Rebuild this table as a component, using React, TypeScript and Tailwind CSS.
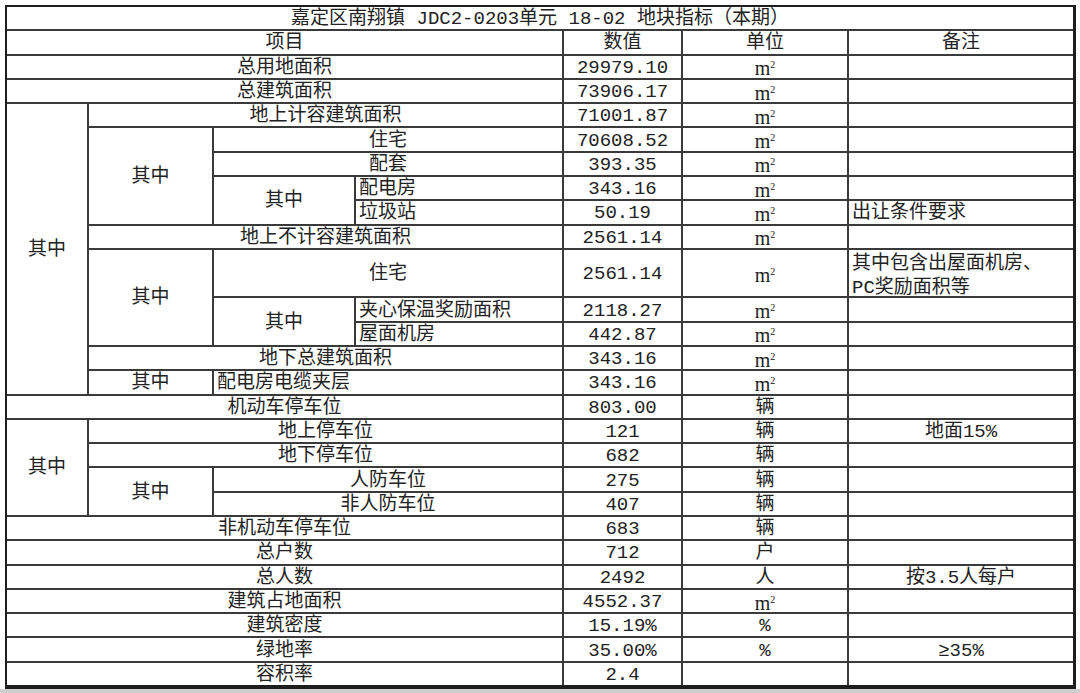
import type { ReactNode } from 'react'

type CellProps = {
  c: string
  r: string
  align?: 'center' | 'left'
  children?: ReactNode
}

function Cell({ c, r, align = 'center', children }: CellProps) {
  return (
    <div
      className={`${c} ${r} bg-white flex items-center pt-[3px] leading-none whitespace-nowrap ${
        align === 'left' ? 'justify-start pl-[3px]' : 'justify-center'
      }`}
    >
      {children}
    </div>
  )
}

// square metre unit, serif m with small raised 2
const M2 = () => (
  <span className="font-['Liberation_Serif',serif] text-[20px]">
    m<span className="relative -top-[7px] text-[10px]">2</span>
  </span>
)

export default function App() {
  return (
    <div className="w-[1080px] h-[693px] bg-white overflow-hidden pl-[5px] pt-[5px] text-[19px] text-[#222] font-['Liberation_Mono','Noto_Sans_CJK_SC',monospace]">
      <div className="w-[1071px] h-[684px] grid grid-cols-[80px_123px_140px_206px_117px_164px_1fr] grid-rows-[repeat(28,minmax(0,1fr))] gap-[2px] bg-[#3a3a3a] border-l-2 border-t-2 border-r-[3px] border-b-[4px] border-[#1e1e1e]">
        {/* title */}
        <Cell c="col-span-7" r="row-start-1">嘉定区南翔镇 JDC2-0203单元 18-02 地块指标（本期）</Cell>

        {/* header */}
        <Cell c="col-start-1 col-span-4" r="row-start-2">项目</Cell>
        <Cell c="col-start-5" r="row-start-2">数值</Cell>
        <Cell c="col-start-6" r="row-start-2">单位</Cell>
        <Cell c="col-start-7" r="row-start-2">备注</Cell>

        <Cell c="col-start-1 col-span-4" r="row-start-3">总用地面积</Cell>
        <Cell c="col-start-5" r="row-start-3">29979.10</Cell>
        <Cell c="col-start-6" r="row-start-3"><M2 /></Cell>
        <Cell c="col-start-7" r="row-start-3" />

        <Cell c="col-start-1 col-span-4" r="row-start-4">总建筑面积</Cell>
        <Cell c="col-start-5" r="row-start-4">73906.17</Cell>
        <Cell c="col-start-6" r="row-start-4"><M2 /></Cell>
        <Cell c="col-start-7" r="row-start-4" />

        {/* 其中 block 1 */}
        <Cell c="col-start-1" r="row-start-5 row-span-12">其中</Cell>

        <Cell c="col-start-2 col-span-3" r="row-start-5">地上计容建筑面积</Cell>
        <Cell c="col-start-5" r="row-start-5">71001.87</Cell>
        <Cell c="col-start-6" r="row-start-5"><M2 /></Cell>
        <Cell c="col-start-7" r="row-start-5" />

        <Cell c="col-start-2" r="row-start-6 row-span-4">其中</Cell>
        <Cell c="col-start-3 col-span-2" r="row-start-6">住宅</Cell>
        <Cell c="col-start-5" r="row-start-6">70608.52</Cell>
        <Cell c="col-start-6" r="row-start-6"><M2 /></Cell>
        <Cell c="col-start-7" r="row-start-6" />

        <Cell c="col-start-3 col-span-2" r="row-start-7">配套</Cell>
        <Cell c="col-start-5" r="row-start-7">393.35</Cell>
        <Cell c="col-start-6" r="row-start-7"><M2 /></Cell>
        <Cell c="col-start-7" r="row-start-7" />

        <Cell c="col-start-3" r="row-start-8 row-span-2">其中</Cell>
        <Cell c="col-start-4" r="row-start-8" align="left">配电房</Cell>
        <Cell c="col-start-5" r="row-start-8">343.16</Cell>
        <Cell c="col-start-6" r="row-start-8"><M2 /></Cell>
        <Cell c="col-start-7" r="row-start-8" />

        <Cell c="col-start-4" r="row-start-9" align="left">垃圾站</Cell>
        <Cell c="col-start-5" r="row-start-9">50.19</Cell>
        <Cell c="col-start-6" r="row-start-9"><M2 /></Cell>
        <Cell c="col-start-7" r="row-start-9" align="left">出让条件要求</Cell>

        <Cell c="col-start-2 col-span-3" r="row-start-10">地上不计容建筑面积</Cell>
        <Cell c="col-start-5" r="row-start-10">2561.14</Cell>
        <Cell c="col-start-6" r="row-start-10"><M2 /></Cell>
        <Cell c="col-start-7" r="row-start-10" />

        <Cell c="col-start-2" r="row-start-11 row-span-4">其中</Cell>
        <Cell c="col-start-3 col-span-2" r="row-start-11 row-span-2">住宅</Cell>
        <Cell c="col-start-5" r="row-start-11 row-span-2">2561.14</Cell>
        <Cell c="col-start-6" r="row-start-11 row-span-2"><M2 /></Cell>
        <div className="col-start-7 row-start-11 row-span-2 bg-white pl-[3px] pt-[2px] leading-[24px]">
          <div>其中包含出屋面机房、</div>
          <div>PC奖励面积等</div>
        </div>

        <Cell c="col-start-3" r="row-start-13 row-span-2">其中</Cell>
        <Cell c="col-start-4" r="row-start-13" align="left">夹心保温奖励面积</Cell>
        <Cell c="col-start-5" r="row-start-13">2118.27</Cell>
        <Cell c="col-start-6" r="row-start-13"><M2 /></Cell>
        <Cell c="col-start-7" r="row-start-13" />

        <Cell c="col-start-4" r="row-start-14" align="left">屋面机房</Cell>
        <Cell c="col-start-5" r="row-start-14">442.87</Cell>
        <Cell c="col-start-6" r="row-start-14"><M2 /></Cell>
        <Cell c="col-start-7" r="row-start-14" />

        <Cell c="col-start-2 col-span-3" r="row-start-15">地下总建筑面积</Cell>
        <Cell c="col-start-5" r="row-start-15">343.16</Cell>
        <Cell c="col-start-6" r="row-start-15"><M2 /></Cell>
        <Cell c="col-start-7" r="row-start-15" />

        <Cell c="col-start-2" r="row-start-16">其中</Cell>
        <Cell c="col-start-3 col-span-2" r="row-start-16" align="left">配电房电缆夹层</Cell>
        <Cell c="col-start-5" r="row-start-16">343.16</Cell>
        <Cell c="col-start-6" r="row-start-16"><M2 /></Cell>
        <Cell c="col-start-7" r="row-start-16" />

        {/* parking */}
        <Cell c="col-start-1 col-span-4" r="row-start-17">机动车停车位</Cell>
        <Cell c="col-start-5" r="row-start-17">803.00</Cell>
        <Cell c="col-start-6" r="row-start-17">辆</Cell>
        <Cell c="col-start-7" r="row-start-17" />

        <Cell c="col-start-1" r="row-start-18 row-span-4">其中</Cell>
        <Cell c="col-start-2 col-span-3" r="row-start-18">地上停车位</Cell>
        <Cell c="col-start-5" r="row-start-18">121</Cell>
        <Cell c="col-start-6" r="row-start-18">辆</Cell>
        <Cell c="col-start-7" r="row-start-18">地面15%</Cell>

        <Cell c="col-start-2 col-span-3" r="row-start-19">地下停车位</Cell>
        <Cell c="col-start-5" r="row-start-19">682</Cell>
        <Cell c="col-start-6" r="row-start-19">辆</Cell>
        <Cell c="col-start-7" r="row-start-19" />

        <Cell c="col-start-2" r="row-start-20 row-span-2">其中</Cell>
        <Cell c="col-start-3 col-span-2" r="row-start-20">人防车位</Cell>
        <Cell c="col-start-5" r="row-start-20">275</Cell>
        <Cell c="col-start-6" r="row-start-20">辆</Cell>
        <Cell c="col-start-7" r="row-start-20" />

        <Cell c="col-start-3 col-span-2" r="row-start-21">非人防车位</Cell>
        <Cell c="col-start-5" r="row-start-21">407</Cell>
        <Cell c="col-start-6" r="row-start-21">辆</Cell>
        <Cell c="col-start-7" r="row-start-21" />

        <Cell c="col-start-1 col-span-4" r="row-start-22">非机动车停车位</Cell>
        <Cell c="col-start-5" r="row-start-22">683</Cell>
        <Cell c="col-start-6" r="row-start-22">辆</Cell>
        <Cell c="col-start-7" r="row-start-22" />

        <Cell c="col-start-1 col-span-4" r="row-start-23">总户数</Cell>
        <Cell c="col-start-5" r="row-start-23">712</Cell>
        <Cell c="col-start-6" r="row-start-23">户</Cell>
        <Cell c="col-start-7" r="row-start-23" />

        <Cell c="col-start-1 col-span-4" r="row-start-24">总人数</Cell>
        <Cell c="col-start-5" r="row-start-24">2492</Cell>
        <Cell c="col-start-6" r="row-start-24">人</Cell>
        <Cell c="col-start-7" r="row-start-24">按3.5人每户</Cell>

        <Cell c="col-start-1 col-span-4" r="row-start-25">建筑占地面积</Cell>
        <Cell c="col-start-5" r="row-start-25">4552.37</Cell>
        <Cell c="col-start-6" r="row-start-25"><M2 /></Cell>
        <Cell c="col-start-7" r="row-start-25" />

        <Cell c="col-start-1 col-span-4" r="row-start-26">建筑密度</Cell>
        <Cell c="col-start-5" r="row-start-26">15.19%</Cell>
        <Cell c="col-start-6" r="row-start-26">%</Cell>
        <Cell c="col-start-7" r="row-start-26" />

        <Cell c="col-start-1 col-span-4" r="row-start-27">绿地率</Cell>
        <Cell c="col-start-5" r="row-start-27">35.00%</Cell>
        <Cell c="col-start-6" r="row-start-27">%</Cell>
        <Cell c="col-start-7" r="row-start-27">≥35%</Cell>

        <Cell c="col-start-1 col-span-4" r="row-start-28">容积率</Cell>
        <Cell c="col-start-5" r="row-start-28">2.4</Cell>
        <Cell c="col-start-6" r="row-start-28" />
        <Cell c="col-start-7" r="row-start-28" />
      </div>
      <div className="h-[4px] -ml-[5px] w-[1080px] bg-[#cfcfcf]" />
    </div>
  )
}
